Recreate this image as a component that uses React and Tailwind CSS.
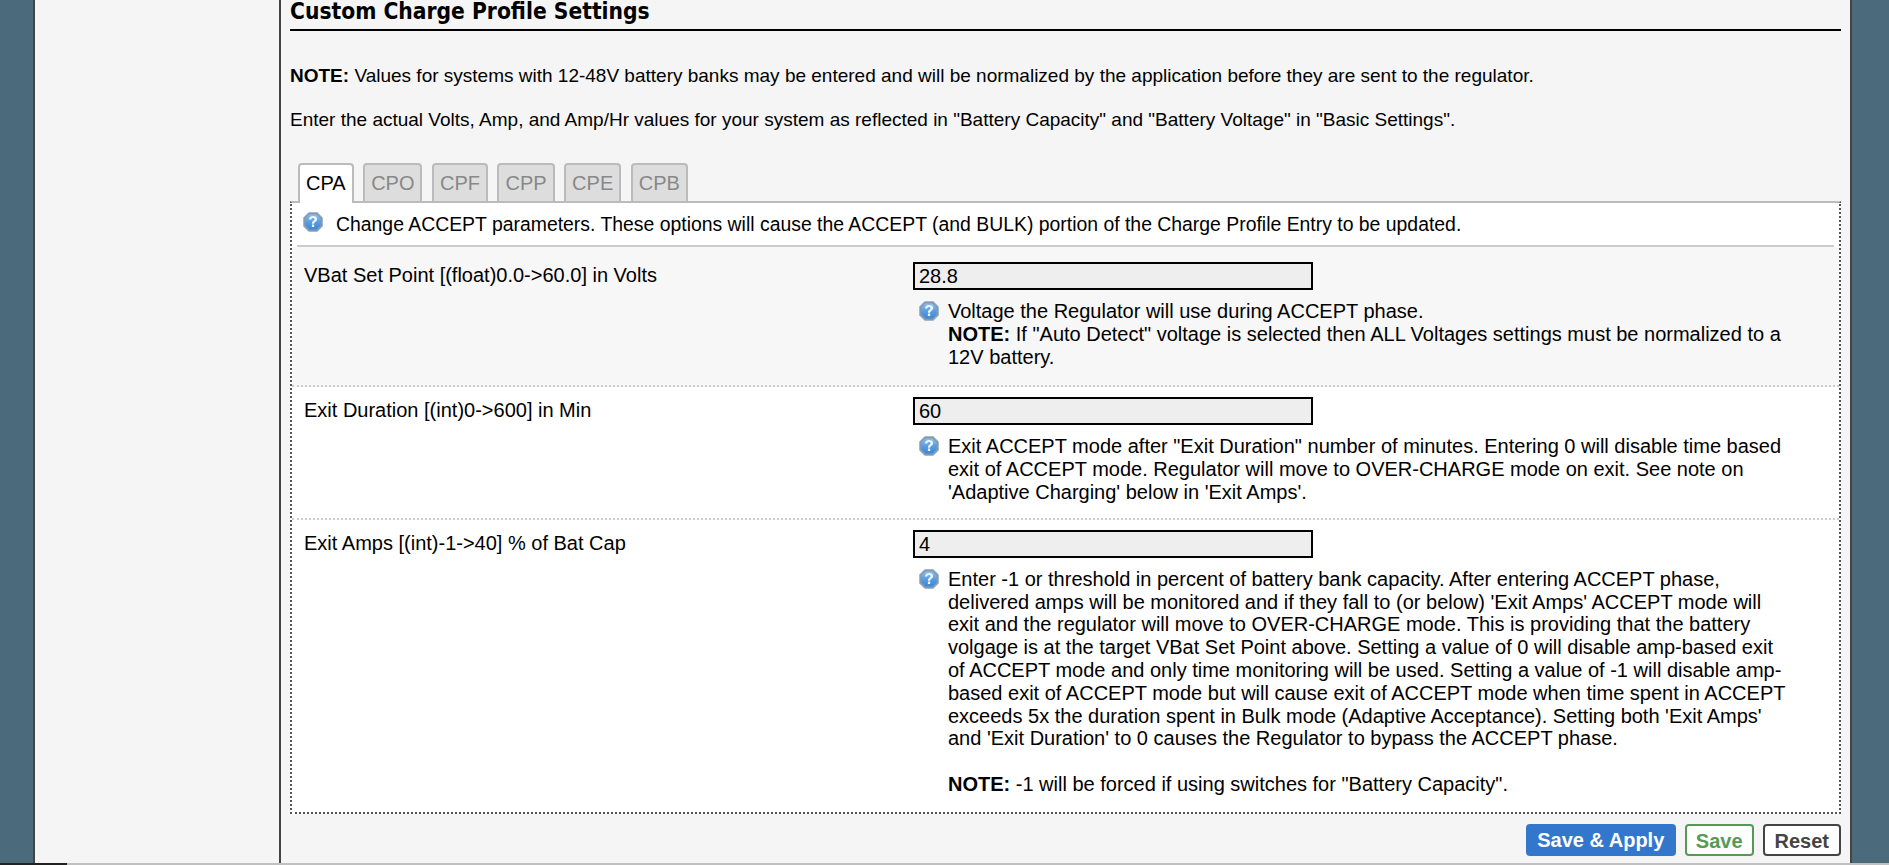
import React from 'react';

const HelpIcon = ({ className }) => (
  <svg className={className} width="20" height="20" viewBox="0 0 20 20">
    <defs>
      <linearGradient id="helpBlue" x1="0" y1="0" x2="0" y2="1">
        <stop offset="0" stopColor="#8fc0ec" />
        <stop offset="0.55" stopColor="#549ae0" />
        <stop offset="1" stopColor="#3d88d6" />
      </linearGradient>
    </defs>
    <path d="M5.8 0.5h8.4l5.3 5.3v8.4l-5.3 5.3H5.8L0.5 14.2V5.8z" fill="#7f9ab4" stroke="#a7b8c8" strokeWidth="1" strokeLinejoin="round" />
    <path d="M6.6 2.5h6.8l4.1 4.1v6.8l-4.1 4.1H6.6l-4.1-4.1V6.6z" fill="url(#helpBlue)" />
    <path d="M5.9 7.6c.2-2.4 1.8-3.6 4.2-3.6 2.4 0 4 1.2 4 3.1 0 1.4-.8 2.1-1.8 2.8-.9.6-1.1.9-1.1 1.8H8.9c0-1.5.5-2.2 1.5-2.9.8-.6 1.1-.9 1.1-1.6 0-.8-.6-1.3-1.5-1.3-1 0-1.6.6-1.8 1.6zM8.9 12.6h2.3v2.3H8.9z" fill="#eef5fc" />
  </svg>
);

const tabs = ['CPA', 'CPO', 'CPF', 'CPP', 'CPE', 'CPB'];

const Row = ({ label, value, className, bodyClass, children }) => (
  <div className={`flex ${className}`}>
    <div className="w-[621px] shrink-0 pl-[12px] pt-[12px] leading-[22.8px] text-[20px]">{label}</div>
    <div className="flex-1 pt-[10px] text-[20px]">
      <input
        readOnly
        value={value}
        className="block w-[400px] h-[28px] border-2 border-black bg-[#eeeeee] px-[4px] outline-none"
      />
      <div className={`relative pl-[35px] pr-[49px] pt-[10px] leading-[22.8px] ${bodyClass}`}>
        <HelpIcon className="absolute left-[6px] top-[11px]" />
        {children}
      </div>
    </div>
  </div>
);

const App = () => {
  return (
    <div className="h-[865px] overflow-hidden bg-[#4b6a7c] font-['Liberation_Sans',Arial,sans-serif] text-[19px] text-black">
      <div className="flex h-[863px] ml-[33px] mr-[37px] border-x-2 border-[#444444] bg-[#f5f5f5]">
        <div className="w-[246px] shrink-0 border-r-2 border-[#444444]" />
        <div className="flex-1 min-w-0 pl-[9px] pr-[9px]">
          <h2 className="-mt-[2px] h-[33px] border-b-2 border-black text-[22.6px] leading-[26px] font-bold font-['DejaVu_Sans_Condensed','DejaVu_Sans',sans-serif]">
            Custom Charge Profile Settings
          </h2>
          <p className="mt-[34px] leading-[22px]">
            <strong>NOTE:</strong> Values for systems with 12-48V battery banks may be entered and will be normalized by the application before they are sent to the regulator.
          </p>
          <p className="mt-[22px] leading-[22px]">
            Enter the actual Volts, Amp, and Amp/Hr values for your system as reflected in "Battery Capacity" and "Battery Voltage" in "Basic Settings".
          </p>

          <div className="flex gap-[9.5px] pl-[8px] mt-[32px] h-[38px] items-start relative z-10 text-[20px]">
            {tabs.map((t, i) => (
              <div
                key={t}
                className={
                  i === 0
                    ? 'h-[40px] px-[6px] pt-[6px] bg-white border-2 border-b-0 border-[#bbbbbb] rounded-t-[4px] leading-[24px] text-black'
                    : 'h-[38px] px-[6px] pt-[6px] bg-[#dddddd] border-2 border-b-0 border-[#bbbbbb] rounded-t-[4px] leading-[24px] text-[#888888]'
                }
              >
                {t}
              </div>
            ))}
          </div>

          <div className="border-t-2 border-t-[#bbbbbb] border-x-2 border-b-2 border-x-[#555555] border-b-[#555555] border-dotted [border-top-style:solid] bg-white">
            <div className="relative h-[42px] pl-[44px] pt-[10px] leading-[22px] text-[19.4px]">
              <HelpIcon className="absolute left-[11px] top-[9px]" />
              Change ACCEPT parameters. These options will cause the ACCEPT (and BULK) portion of the Charge Profile Entry to be updated.
            </div>
            <div className="mx-[5px] border-b-2 border-[#cccccc]" />
            <Row label="VBat Set Point [(float)0.0->60.0] in Volts" value="28.8" className="bg-[#f7f7f7] pt-[5px] border-b-2 border-dotted border-[#cccccc]" bodyClass="pb-[17px]">
              Voltage the Regulator will use during ACCEPT phase.
              <br />
              <strong>NOTE:</strong> If "Auto Detect" voltage is selected then ALL Voltages settings must be normalized to a 12V battery.
            </Row>
            <Row label="Exit Duration [(int)0->600] in Min" value="60" className="bg-white border-b-2 border-dotted border-[#cccccc]" bodyClass="pb-[14px]">
              Exit ACCEPT mode after "Exit Duration" number of minutes. Entering 0 will disable time based exit of ACCEPT mode. Regulator will move to OVER-CHARGE mode on exit. See note on 'Adaptive Charging' below in 'Exit Amps'.
            </Row>
            <Row label="Exit Amps [(int)-1->40] % of Bat Cap" value="4" className="bg-white" bodyClass="pb-[16px]">
              Enter -1 or threshold in percent of battery bank capacity. After entering ACCEPT phase, delivered amps will be monitored and if they fall to (or below) 'Exit Amps' ACCEPT mode will exit and the regulator will move to OVER-CHARGE mode. This is providing that the battery volgage is at the target VBat Set Point above. Setting a value of 0 will disable amp-based exit of ACCEPT mode and only time monitoring will be used. Setting a value of -1 will disable amp-based exit of ACCEPT mode but will cause exit of ACCEPT mode when time spent in ACCEPT exceeds 5x the duration spent in Bulk mode (Adaptive Acceptance). Setting both 'Exit Amps' and 'Exit Duration' to 0 causes the Regulator to bypass the ACCEPT phase.
              <br />
              <br />
              <strong>NOTE:</strong> -1 will be forced if using switches for "Battery Capacity".
            </Row>
          </div>

          <div className="flex justify-end gap-[9px] mt-[10px]">
            <button className="h-[32px] px-[11.5px] rounded-[4px] bg-[#3377cc] text-white font-bold text-[20px]">Save &amp; Apply</button>
            <button className="h-[32px] px-[9px] rounded-[4px] border-2 border-[#559955] bg-white text-[#559955] font-bold text-[20px]">Save</button>
            <button className="h-[32px] px-[10px] rounded-[4px] border-2 border-[#444444] bg-white text-[#444444] font-bold text-[20px]">Reset</button>
          </div>
        </div>
      </div>
      <div className="flex h-[2px]">
        <div className="w-[67px] bg-[#222222]" />
        <div className="flex-1 bg-[#c0c0c0]" />
      </div>
    </div>
  );
};

export default App;
